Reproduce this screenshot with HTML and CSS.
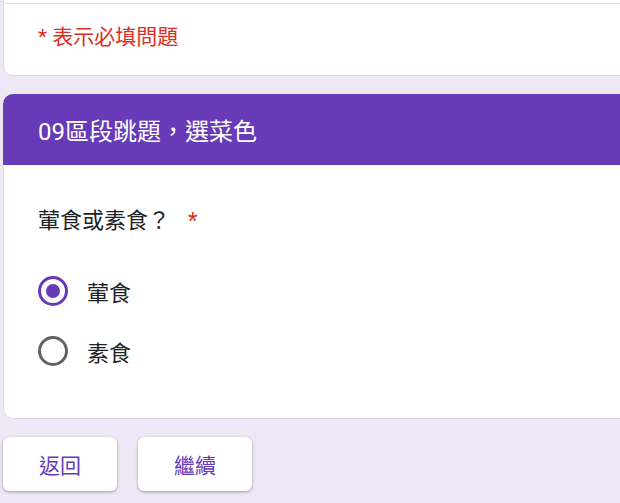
FILE: index.html
```html
<!DOCTYPE html>
<html lang="zh-Hant">
<head>
<meta charset="utf-8">
<link rel="stylesheet" href="styles.css">
</head>
<body>
<div class="page">
  <div class="card card-top">
    <div class="email-row"></div>
    <div class="required-note">* 表示必填問題</div>
  </div>

  <div class="section">
    <div class="section-head">09區段跳題，選菜色</div>
    <div class="section-body">
      <div class="question">葷食或素食？<span class="star">*</span></div>
      <div class="options">
        <label class="option">
          <span class="radio checked"><span class="dot"></span></span>
          <span class="opt-text">葷食</span>
        </label>
        <label class="option">
          <span class="radio"></span>
          <span class="opt-text">素食</span>
        </label>
      </div>
    </div>
  </div>

  <div class="nav">
    <button class="btn">返回</button>
    <button class="btn">繼續</button>
  </div>
</div>
</body>
</html>
```
FILE: styles.css
```css
html, body {
  margin: 0;
  padding: 0;
  background: #ede7f6;
  overflow: hidden;
  height: 503px;
}
body {
  font-family: Roboto, "Noto Sans CJK TC", "Noto Sans", sans-serif;
  color: #202124;
}
.page {
  padding-left: 3px;
  width: 700px;
}
.card {
  background: #fff;
  border: 1px solid #dadce0;
  border-radius: 10px;
}
.card-top {
  margin-top: -30px;
}
.email-row {
  height: 32px;
  border-bottom: 1px solid #dadce0;
}
.required-note {
  color: #d93025;
  font-size: 21px;
  line-height: 30px;
  padding: 18px 0 23px 34px;
}
.section {
  margin-top: 18px;
  border-radius: 10px;
  overflow: hidden;
}
.section-head {
  background: #673ab7;
  color: #fff;
  height: 71px;
  display: flex;
  align-items: center;
  padding-left: 35px;
  font-size: 24px;
  padding-bottom: 1px;
  box-sizing: border-box;
}
.section-body {
  background: #fff;
  border: 1px solid #dadce0;
  border-top: none;
  border-radius: 0 0 10px 10px;
  padding: 40px 0 43px 34px;
}
.question {
  font-size: 22px;
  line-height: 32px;
}
.star {
  color: #d93025;
  margin-left: 18px;
}
.options {
  margin-top: 30px;
  display: flex;
  flex-direction: column;
  gap: 12px;
}
.option {
  display: flex;
  align-items: center;
  height: 48px;
  gap: 19px;
}
.radio {
  width: 30px;
  height: 30px;
  box-sizing: border-box;
  border: 3px solid #5f6368;
  border-radius: 50%;
  display: flex;
  align-items: center;
  justify-content: center;
}
.radio.checked {
  border-color: #673ab7;
}
.dot {
  width: 14px;
  height: 14px;
  border-radius: 50%;
  background: #673ab7;
}
.opt-text {
  font-size: 22px;
}
.nav {
  margin-top: 18px;
  display: flex;
  gap: 21px;
}
.btn {
  width: 114px;
  height: 54px;
  border: none;
  border-radius: 6px;
  background: #fff;
  box-shadow: 0 1px 3px rgba(0,0,0,0.35);
  color: #673ab7;
  font-family: Roboto, "Noto Sans CJK TC", sans-serif;
  font-size: 21px;
  padding: 0;
}
```
